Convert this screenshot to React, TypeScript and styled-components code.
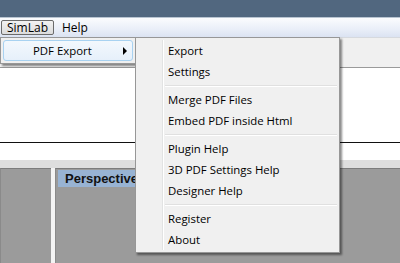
import React from 'react';
import styled, { createGlobalStyle } from 'styled-components';

const GlobalStyle = createGlobalStyle`
    html, body {
        margin: 0;
        padding: 0;
        background: #a0a0a0;
    }
    * {
        box-sizing: border-box;
    }
`;

const Window = styled.div`
    position: relative;
    width: 400px;
    height: 263px;
    overflow: hidden;
    display: flex;
    flex-direction: column;
    background: #a0a0a0;
    font-family: 'Open Sans', 'Noto Sans', sans-serif;
    font-size: 11.4px;
    color: #000;
`;

const TitleBar = styled.div`
    height: 18px;
    background: #51677f;
    border-bottom: 1px solid #b9c5d2;
`;

const MenuBar = styled.div`
    height: 19px;
    display: flex;
    align-items: center;
    padding-left: 1px;
    background: linear-gradient(#fbfcfe, #e9eef8 60%, #dbe3f2);
    font-size: 12px;
`;

const MenuTitle = styled.div<{ open?: boolean }>`
    height: 15px;
    line-height: 13px;
    padding: 0 5px;
    margin-right: 2px;
    border: 1px solid ${({ open }) => (open ? '#6b6b6b' : 'transparent')};
    border-radius: 2px;
    background: ${({ open }) =>
        open ? 'linear-gradient(#f2f2f2, #dcdcdc)' : 'transparent'};
`;

const Toolbar = styled.div`
    height: 31px;
    background: #f0f0f0;
    border-top: 1px solid #d6d9de;
    border-bottom: 1px solid #9a9a9a;
`;

const Canvas = styled.div`
    height: 92px;
    background: #fff;
    display: flex;
    flex-direction: column;
    justify-content: flex-end;
    padding-bottom: 17px;
`;

const Rule = styled.div`
    height: 1px;
    background: #111;
`;

const Strip = styled.div`
    height: 8px;
    background: #dedede;
`;

const Workspace = styled.div`
    flex: 1;
    display: flex;
    gap: 4px;
    background: #f4f4f4;
`;

const SidePanel = styled.div<{ width?: number }>`
    width: ${({ width }) => (width ? `${width}px` : 'auto')};
    flex: ${({ width }) => (width ? 'none' : '1')};
    background: #9b9b9b;
    border-top: 1px solid #7c7c7c;
    border-left: 1px solid #8a8a8a;
`;

const PanelHeader = styled.div`
    margin: 1px 0 0 2px;
    width: 80px;
    height: 17px;
    line-height: 17px;
    padding-left: 7px;
    background: #98b3d3;
    font-family: 'Liberation Sans', Arial, sans-serif;
    font-weight: bold;
    font-size: 13px;
    color: #111;
`;

const Popup = styled.div<{ left: number; top: number; width: number }>`
    position: absolute;
    left: ${({ left }) => left}px;
    top: ${({ top }) => top}px;
    width: ${({ width }) => width}px;
    background: #f0f0f0;
    border: 1px solid #979797;
    padding: 2px;
    box-shadow: 2px 2px 2px rgba(0, 0, 0, 0.45);
`;

const Gutter = styled.div`
    position: relative;
    &::before {
        content: '';
        position: absolute;
        left: 24px;
        top: 0;
        bottom: 0;
        width: 1px;
        background: #e2e3e3;
        box-shadow: 1px 0 0 #fff;
    }
`;

const Item = styled.div<{ active?: boolean }>`
    position: relative;
    height: 21px;
    line-height: 20px;
    padding-left: 29px;
    white-space: nowrap;
    border: 1px solid ${({ active }) => (active ? '#a8d2f1' : 'transparent')};
    border-radius: 3px;
    background: ${({ active }) =>
        active ? 'linear-gradient(#f3f8fd, #e6f0fa)' : 'transparent'};
`;

const Arrow = styled.span`
    position: absolute;
    right: 5px;
    top: 6px;
    width: 0;
    height: 0;
    border-top: 4px solid transparent;
    border-bottom: 4px solid transparent;
    border-left: 4px solid #000;
`;

const Separator = styled.div`
    height: 7px;
    margin-left: 27px;
    display: flex;
    flex-direction: column;
    justify-content: center;
    &::before {
        content: '';
        height: 1px;
        background: #e0e0e0;
        box-shadow: 0 1px 0 #fff;
    }
`;

const groups = [
    ['Export', 'Settings'],
    ['Merge PDF Files', 'Embed PDF inside Html'],
    ['Plugin Help', '3D PDF Settings Help', 'Designer Help'],
    ['Register', 'About'],
];

export default function App() {
    return (
        <Window>
            <GlobalStyle />
            <TitleBar />
            <MenuBar>
                <MenuTitle open>SimLab</MenuTitle>
                <MenuTitle>Help</MenuTitle>
            </MenuBar>
            <Toolbar />
            <Canvas>
                <Rule />
            </Canvas>
            <Strip />
            <Workspace>
                <SidePanel width={51} />
                <SidePanel>
                    <PanelHeader>Perspective</PanelHeader>
                </SidePanel>
            </Workspace>

            <Popup left={0} top={37} width={136}>
                <Item active>
                    PDF Export
                    <Arrow />
                </Item>
            </Popup>

            <Popup left={135} top={37} width={205}>
                <Gutter>
                    {groups.map((group, i) => (
                        <React.Fragment key={i}>
                            {i > 0 && <Separator />}
                            {group.map((label) => (
                                <Item key={label}>{label}</Item>
                            ))}
                        </React.Fragment>
                    ))}
                </Gutter>
            </Popup>
        </Window>
    );
}
